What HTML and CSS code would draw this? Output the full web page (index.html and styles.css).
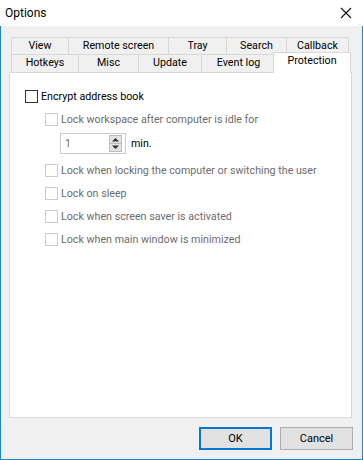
FILE: index.html
```html
<!DOCTYPE html>
<html lang="en">
<head>
    <meta charset="UTF-8">
    <title>Options</title>
    <link rel="stylesheet" href="styles.css">
</head>
<body>

<div class="titlebar">
    <span class="title">Options</span>
    <svg class="close" width="12" height="12" viewBox="0 0 12 12">
        <path d="M1 1 L11 11 M11 1 L1 11" stroke="#111" stroke-width="1.1" fill="none"/>
    </svg>
</div>

<div class="dialog">
    <!-- Pestañas en dos filas -->
    <div class="tabs">
        <div class="tab-row row1">
            <div class="tab">View</div>
            <div class="tab">Remote screen</div>
            <div class="tab">Tray</div>
            <div class="tab">Search</div>
            <div class="tab">Callback</div>
        </div>
        <div class="tab-row row2">
            <div class="tab">Hotkeys</div>
            <div class="tab">Misc</div>
            <div class="tab">Update</div>
            <div class="tab">Event log</div>
            <div class="tab active">Protection</div>
        </div>
    </div>

    <div class="panel">
        <label class="check">
            <span class="box"></span>Encrypt address book
        </label>
        <div class="sub">
            <label class="check disabled first">
                <span class="box"></span>Lock workspace after computer is idle for
            </label>
            <div class="spin-row">
                <div class="spin">
                    <span class="spin-value">1</span>
                    <svg class="spin-btns" width="13" height="17" viewBox="0 0 13 17">
                        <rect x="0.5" y="0.5" width="12" height="16" fill="#e3e3e3" stroke="#bcbcbc"/>
                        <line x1="1" y1="8.5" x2="12" y2="8.5" stroke="#bcbcbc"/>
                        <path d="M3 6.5 L6.5 3 L10 6.5 Z" fill="#333"/>
                        <path d="M3 10.5 L10 10.5 L6.5 14 Z" fill="#333"/>
                    </svg>
                </div>
                <span class="unit">min.</span>
            </div>
            <label class="check disabled gap">
                <span class="box"></span>Lock when locking the computer or switching the user
            </label>
            <label class="check disabled">
                <span class="box"></span>Lock on sleep
            </label>
            <label class="check disabled">
                <span class="box"></span>Lock when screen saver is activated
            </label>
            <label class="check disabled">
                <span class="box"></span>Lock when main window is minimized
            </label>
        </div>
    </div>

    <div class="buttons">
        <button class="btn default">OK</button>
        <button class="btn">Cancel</button>
    </div>
</div>

</body>
</html>
```

FILE: styles.css
```css
body {
    margin: 0;
    width: 363px;
    height: 460px;
    font-family: Roboto, "Open Sans", sans-serif;
    font-size: 10.7px;
    color: #000;
    background: #fff;
    overflow: hidden;
}

.titlebar {
    height: 26px;
    display: flex;
    align-items: center;
    justify-content: space-between;
    padding: 0 11px 0 5px;
    background: #fff;
}

.title {
    font-size: 12px;
}

.dialog {
    height: 434px;
    box-sizing: border-box;
    border: 1px solid #1883d7;
    border-top: none;
    background: #f0f0f0;
    padding-top: 11px;
}

.tabs {
    margin-left: 10px;
    width: 338px;
}

.tab-row {
    display: grid;
}

.row1 {
    grid-template-columns: 57px 100px 58px 60px 63px;
    height: 17px;
}

.row2 {
    grid-template-columns: 67px 60px 63px 74px 74px;
    height: 18px;
}

.tab {
    border: 1px solid #d9d9d9;
    border-bottom: none;
    border-right: none;
    background: #f0f0f0;
    display: flex;
    align-items: center;
    justify-content: center;
    line-height: 1;
}

.tab:last-child {
    border-right: 1px solid #d9d9d9;
}

.tab.active {
    margin: -2px -2px -1px -2px;
    background: #fff;
    border-right: 1px solid #d9d9d9;
    position: relative;
    z-index: 1;
    padding-bottom: 3px;
}

.panel {
    margin-left: 8px;
    width: 343px;
    height: 346px;
    box-sizing: border-box;
    border: 1px solid #d9d9d9;
    background: #fff;
    padding: 15px 0 0 15px;
    display: flex;
    flex-direction: column;
}

.check {
    display: flex;
    align-items: center;
    height: 16px;
}

.check .box {
    width: 13px;
    height: 13px;
    box-sizing: border-box;
    border: 1px solid #333;
    background: #fff;
    margin-right: 3px;
}

.check.disabled {
    color: #6d6d6d;
    margin-top: 7px;
}

.check.disabled .box {
    border-color: #cccccc;
}

.check.gap {
    margin-top: 8px;
}

.sub {
    padding-left: 20px;
    display: flex;
    flex-direction: column;
}

.spin-row {
    display: flex;
    align-items: center;
    margin: 6px 0 0 15px;
}

.spin {
    width: 66px;
    height: 21px;
    box-sizing: border-box;
    border: 1px solid #cccccc;
    display: flex;
    align-items: center;
    justify-content: space-between;
    padding: 0 3px 0 4px;
}

.spin-value {
    color: #6d6d6d;
}

.unit {
    margin-left: 5px;
}

.buttons {
    display: flex;
    justify-content: flex-end;
    gap: 8px;
    margin-top: 9px;
    padding-right: 9px;
}

.btn {
    width: 73px;
    height: 23px;
    box-sizing: border-box;
    border: 1px solid #adadad;
    background: #e1e1e1;
    font-family: Roboto, "Open Sans", sans-serif;
    font-size: 11px;
    color: #000;
    padding: 0;
}

.btn.default {
    border: 2px solid #0078d7;
}
```
